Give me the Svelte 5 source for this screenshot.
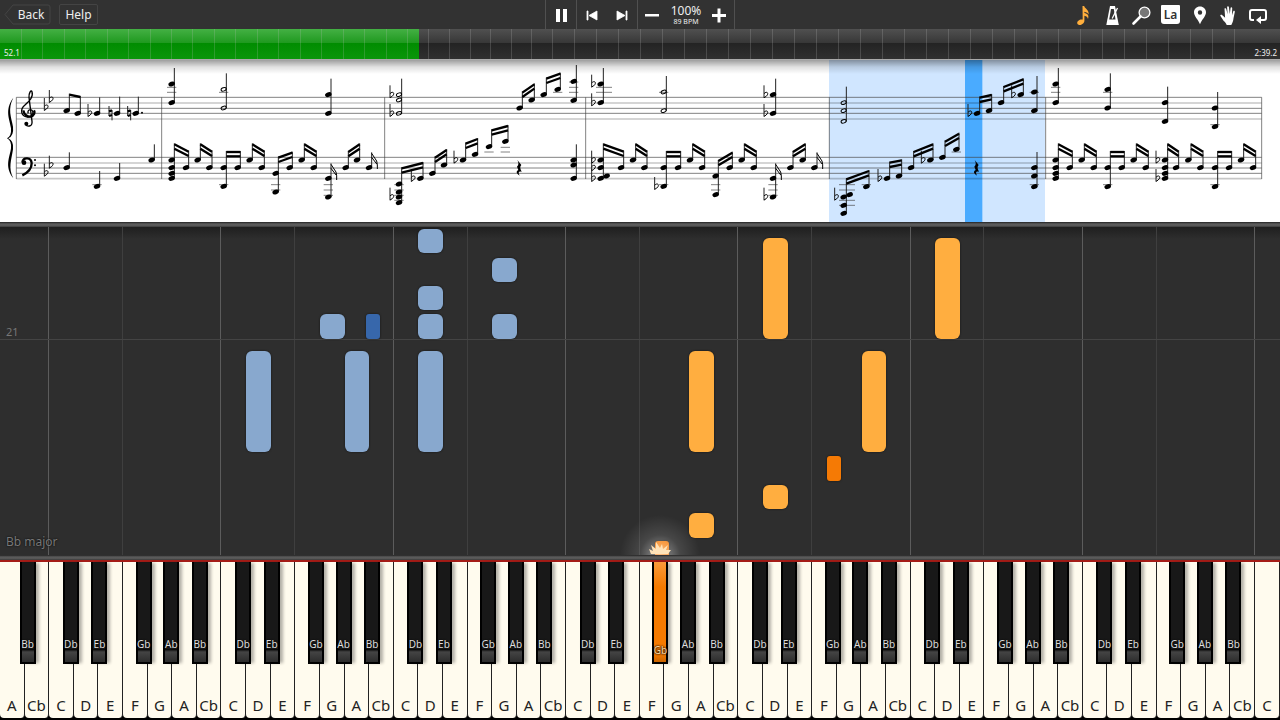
<script>
    // widths of the measures on the progress bar
    const measures = [218, ...Array(19).fill(214), ...Array(6).fill(205), ...Array(32).fill(220), 245];
    const progress = 32.7;

    const names = ['A', 'Cb', 'C', 'D', 'E', 'F', 'G'];
    // black key that sits right of a white key, and how far off the gap it is
    const blacks = {
        A: { name: 'Bb', shift: 4 },
        C: { name: 'Db', shift: -2 },
        D: { name: 'Eb', shift: 2 },
        F: { name: 'Gb', shift: -3 },
        G: { name: 'Ab', shift: 0 }
    };
    const keys = Array.from({ length: 52 }, (_, i) => ({
        id: i,
        name: names[i % 7],
        black: i < 51 ? blacks[names[i % 7]] : undefined
    }));
    const pressed = 26;

    // key = white key index, bottom = distance from the keyboard
    const falling = [
        { key: 17, bottom: 302, height: 24, hand: 'left' },
        { key: 20, bottom: 273, height: 24, hand: 'left' },
        { key: 17, bottom: 245, height: 24, hand: 'left' },
        { key: 17, bottom: 216, height: 25, hand: 'left' },
        { key: 20, bottom: 216, height: 25, hand: 'left' },
        { key: 13, bottom: 216, height: 25, hand: 'left' },
        { key: 14, bottom: 216, height: 25, hand: 'left', sharp: 4 },
        { key: 10, bottom: 103, height: 101, hand: 'left' },
        { key: 14, bottom: 103, height: 101, hand: 'left' },
        { key: 17, bottom: 103, height: 101, hand: 'left' },
        { key: 31, bottom: 216, height: 101, hand: 'right' },
        { key: 38, bottom: 216, height: 101, hand: 'right' },
        { key: 28, bottom: 103, height: 101, hand: 'right' },
        { key: 35, bottom: 103, height: 101, hand: 'right' },
        { key: 33, bottom: 74, height: 25, hand: 'right', sharp: -3 },
        { key: 31, bottom: 46, height: 24, hand: 'right' },
        { key: 28, bottom: 17, height: 25, hand: 'right' },
        { key: 26, bottom: -12, height: 26, hand: 'right', sharp: -3 }
    ];

    // score: x, note heads, top of the stem, extras
    const c = (x, n, top, extra = {}) => ({ x, n, top, flats: [], ledgers: [], ...extra });
    const down = (x1, x2) => [c(x1, [300], 250), c(x2, [323], 272)];
    const L3 = [374, 390, 406];

    const score = [
        {
            x: 0,
            chords: [
                c(200, [152], 101), c(233, [160], 108),
                c(291, [160], 112, { flats: [160] }),
                c(351, [160], 110, { natural: true }),
                c(407, [160], 110, { natural: true, dot: true }),
                c(200, [323], 277), c(291, [379], 333, { ledgers: [374] }),
                c(351, [355], 309), c(455, [300], 253)
            ],
            beams: [[208, 101, 241, 108, 1]]
        },
        {
            x: 0,
            chords: [
                c(515, [72, 128], 24, { ledgers: [82, 97] }),
                c(671, [88, 144], 40, { half: true, ledgers: [97] }),
                c(985, [104, 160], 56),
                c(515, [300, 323, 340, 355], 250), c(558, [323], 272),
                ...down(593, 628),
                c(671, [323, 379], 273, { ledgers: [374] }), c(713, [323], 273),
                ...down(749, 785),
                c(827, [340, 396], 290, { ledgers: [374, 390] }), c(869, [323], 275),
                ...down(905, 941),
                c(985, [355, 411], 310, { ledgers: L3, flag: true }),
                c(1037, [323], 273), c(1071, [300], 250),
                c(1107, [323], 277, { flag: true })
            ],
            beams: [
                [523, 250, 566, 272], [601, 250, 636, 272], [679, 273, 721, 273], [757, 250, 793, 272],
                [835, 290, 877, 275], [913, 250, 949, 272], [1045, 273, 1079, 250]
            ]
        },
        {
            x: 960,
            chords: [
                c(237, [104, 120, 160], 56, { half: true, flats: [104, 160] }),
                c(599, [144], 95), c(635, [120], 70), c(671, [104], 53),
                c(713, [88], 38, { ledgers: [97] }),
                c(761, [64, 121], 15, { ledgers: [66, 82, 97] }),
                c(237, [372, 396, 411, 428], 322, { flats: [411], ledgers: [374, 390, 406, 421] }),
                c(301, [355], 306, { flats: [355] }),
                c(337, [340], 290), c(372, [315], 267),
                c(429, [300], 248, { flats: [300] }), c(465, [283], 234),
                c(507, [260], 208, { ledgers: [276] }), c(556, [244], 195, { ledgers: [262, 276] }),
                c(761, [300, 315, 355], 253)
            ],
            beams: [
                [607, 95, 643, 70], [679, 53, 721, 38], [245, 322, 309, 306], [345, 290, 380, 267],
                [437, 248, 473, 234], [515, 208, 564, 195]
            ],
            rest: 597
        },
        {
            x: 1740,
            chords: [
                c(62, [72, 128], 24, { flats: [72, 128], ledgers: [82, 97], wide: 20 }),
                c(251, [96, 152], 48, { half: true, ledgers: [97] }),
                c(579, [104, 160], 56, { flats: [104, 160] }),
                c(62, [300, 323, 355], 250, { flats: [300, 323, 355], second: 348 }), c(123, [323], 272),
                ...down(159, 193),
                c(251, [323, 379], 273, { flats: [379], ledgers: [374] }), c(294, [323], 273),
                ...down(330, 366),
                c(407, [348, 404], 300, { ledgers: [374, 390] }), c(449, [323], 275),
                ...down(485, 521),
                c(579, [355, 411], 310, { flats: [411], ledgers: L3, flag: true }),
                c(631, [323], 273), c(668, [300], 250),
                c(703, [323], 277, { flag: true })
            ],
            beams: [
                [70, 250, 131, 272], [167, 250, 201, 272], [259, 273, 302, 273], [338, 250, 374, 272],
                [415, 300, 457, 275], [493, 250, 529, 272], [639, 273, 676, 250]
            ]
        },
        {
            x: 2460,
            chords: [
                c(71, [128, 152, 184], 80, { half: true }),
                c(471, [160], 110, { flats: [160] }), c(507, [152], 102),
                c(543, [128], 78), c(602, [104], 55, { flats: [104] }),
                c(643, [96, 152], 48, { ledgers: [97] }),
                c(71, [411, 436, 460], 355, { flats: [411], second: 404, wide: 20, ledgers: [374, 390, 421, 436] }),
                c(139, [380], 330, { ledgers: [374] }),
                c(201, [355], 305, { flats: [355] }), c(237, [348], 298),
                c(273, [323], 273), c(331, [300], 250, { flats: [300] }),
                c(367, [292], 242), c(409, [268], 218, { ledgers: [276] }),
                c(643, [323, 348, 380], 276, { ledgers: [374] })
            ],
            beams: [
                [479, 110, 515, 102], [551, 78, 610, 55], [79, 355, 147, 330], [209, 305, 245, 298],
                [281, 273, 339, 250], [375, 242, 417, 218]
            ],
            rest: 469
        },
        {
            x: 3090,
            chords: [
                c(77, [72, 128], 24, { ledgers: [82, 97] }),
                c(233, [88, 144], 40, { ledgers: [97] }),
                c(405, [128, 184], 80), c(555, [144, 200], 96, { ledgers: [194] }),
                c(77, [300, 323, 340, 355], 250), c(119, [323], 272),
                ...down(155, 191),
                c(233, [323, 380], 273, { ledgers: [374] }), c(275, [323], 273),
                ...down(311, 347),
                c(405, [300, 323, 340, 355], 250, { flats: [300, 355] }), c(438, [323], 272),
                ...down(475, 511),
                c(555, [323, 380], 273, { ledgers: [374] }), c(597, [323], 273),
                ...down(633, 669)
            ],
            beams: [
                [85, 250, 127, 272], [163, 250, 199, 272], [241, 273, 283, 273], [319, 250, 355, 272],
                [413, 250, 446, 272], [483, 250, 519, 272], [563, 273, 605, 273], [641, 250, 677, 272]
            ]
        }
    ];

    const darkLines = [112, 145, 160, 292, 324, 340];
    const paleLines = [129, 177, 309, 356];
    const barLines = [49, 485, 1154, 1757, 2488, 3137, 3785];
    const signature = [[137, 142], [152, 118], [137, 339], [152, 315]];
</script>

{#snippet flat(x, y)}
    <path class="stem" d="M{x - 4} {y - 28}V{y + 10}" />
    <path class="bowl" d="M{x - 4} {y - 3}C{x + 3} {y - 11} {x + 10} {y - 6} {x + 6} {y + 1}Q{x + 3} {y + 6} {x - 4} {y + 9}" />
{/snippet}

<div class="app">
    <header class="toolbar">
        <nav>
            <button class="back">
                <svg viewBox="0 0 47 21" width="47" height="21"><path d="M9 1H44Q46 1 46 3V18Q46 20 44 20H9L1 10.500Z" fill="none" stroke="#444" /></svg>
                <span>Back</span>
            </button>
            <button class="help">Help</button>
        </nav>

        <div class="transport">
            <div class="group">
                <button class="icon" aria-label="Pause"><svg viewBox="0 0 30 28"><path d="M10 8h4v13h-4zM17 8h4v13h-4z" /></svg></button>
            </div>
            <div class="group">
                <button class="icon" aria-label="Previous"><svg viewBox="0 0 30 28"><path d="M10 10h1v9h-1zM20 10v9l-8-4.500z" stroke="#fff" stroke-width=".8" /></svg></button>
                <button class="icon" aria-label="Next"><svg viewBox="0 0 30 28"><path d="M19 10h1v9h-1zM10 10v9l8-4.500z" stroke="#fff" stroke-width=".8" /></svg></button>
            </div>
            <div class="group">
                <button class="icon" aria-label="Slower"><svg viewBox="0 0 30 28"><path d="M7 13h14v2.500H7z" /></svg></button>
                <div class="tempo"><span>100%</span><small>89 BPM</small></div>
                <button class="icon" aria-label="Faster"><svg viewBox="0 0 30 28"><path d="M8 13h14v3H8zM13.500 7.500h3v14h-3z" /></svg></button>
            </div>
        </div>

        <div class="tools">
            <button class="icon" aria-label="Notes">
                <svg viewBox="0 0 30 28" class="amber"><path d="M13.500 5H15.200C15.500 7.500 20.600 9 19.500 13.500C19 12 17.500 11.200 15.400 10.800V12C18.500 12.800 20.300 14 19 18C18.600 16 17.500 15.200 15.400 14.800V20C15.200 23.500 9.500 25.500 8.300 22.500C7.700 19.800 11.300 17.800 13.700 18.600Z" /></svg>
            </button>
            <button class="icon" aria-label="Metronome">
                <svg viewBox="0 0 30 28"><path d="M12 5h5l3.800 19H8.300z" /><path d="M13 8h2.800l1.700 10.500h-6.300z" fill="#333" /><path d="M14.200 17.500L19.500 7" stroke="#fff" stroke-width="1.300" /></svg>
            </button>
            <button class="icon" aria-label="Zoom">
                <svg viewBox="0 0 30 28"><circle cx="17.500" cy="11.500" r="5.400" fill="#777" stroke="#fff" stroke-width="1.300" /><path d="M13.500 15.500L6.500 22.500" stroke="#fff" stroke-width="2.600" stroke-linecap="round" /></svg>
            </button>
            <button class="icon" aria-label="Note names"><span class="la">La</span></button>
            <button class="icon" aria-label="Bookmark">
                <svg viewBox="0 0 30 28"><path fill-rule="evenodd" d="M15 5.500c-3.400 0-6 2.600-6 5.700 0 4 4 7 6 12 2-5 6-8 6-12 0-3.100-2.600-5.700-6-5.700zm0 3.800a2.200 2.200 0 1 1 0 4.400 2.200 2.200 0 0 1 0-4.400z" /></svg>
            </button>
            <button class="icon" aria-label="Hands">
                <svg viewBox="0 0 30 28"><path d="M10.500 7.500c1-.7 1.600 0 1.800.8l1.300 5-.5-7.200c.1-1.100 1.600-1.100 1.800 0l.9 7 .8-6.300c.3-1 1.600-.8 1.600.3l-.2 7.200 1.300-4c.5-1 1.700-.4 1.500.6l-1.300 6.400c-.2 3-1.200 4.700-2.200 6.700h-4.600c-.7-1.800-1.600-2.900-3-4l-3.400-5.300c-.1-1 1.100-1.400 2-.5l2.800 2.500z" /></svg>
            </button>
            <button class="icon" aria-label="Loop">
                <svg viewBox="0 0 30 28"><path d="M11 19H9Q7 19 7 17V11Q7 9 9 9H21Q23 9 23 11V17Q23 19 21 19H17" fill="none" stroke="#fff" stroke-width="2" /><path d="M18 15v8l-5-4z" /></svg>
            </button>
        </div>
    </header>

    <div class="timeline" role="progressbar" aria-label="Song position" aria-valuenow={progress}>
        <div class="played" style="width: {progress}%"></div>
        <div class="ticks">
            {#each measures as m}<i style="flex-grow: {m}"></i>{/each}
        </div>
        <div class="times"><span>52.1</span><span>2:39.2</span></div>
    </div>

    <svg class="sheet" viewBox="0 0 3840 486" role="img" aria-label="Sheet music">
        <rect x="2487" width="648" height="486" fill="#d0e6ff" />
        <rect x="2895" width="52" height="486" fill="#4aabff" />
        {#each paleLines as y}<path class="pale" d="M49 {y}H3785" />{/each}
        {#each darkLines as y}<path class="thin" d="M49 {y}H3785" />{/each}
        {#each barLines as x}<path class="thin" d="M{x} 112V357" />{/each}

        <path d="M40 113C12 150 30 180 33 205Q35 228 21 235Q35 242 33 265C30 290 12 320 40 355C24 325 34 300 39 268Q42 243 25 235Q42 227 39 200C34 170 22 148 40 113Z" />
        <path class="clef" d="M85 160C80 152 92 144 98 153C102 163 92 173 82 171C62 168 60 148 74 136C88 123 101 111 96 95C93 88 86 100 87 112L96 184C98 200 80 203 76 191" />
        <path class="clef fat" d="M70 151C72 163 82 171 92 170C102 167 106 158 102 151" />
        <circle cx="79" cy="191" r="6" />
        <path class="clef fat" d="M67 307C70 290 94 292 95 310C95 328 82 339 67 346" />
        <circle cx="72" cy="308" r="7" />
        <circle cx="105" cy="300" r="3" /><circle cx="105" cy="316" r="3" />
        {#each signature as [x, y]}{@render flat(x, y)}{/each}

        {#each score as bar}
            <g transform="translate({bar.x})">
                {#each bar.chords as ch}
                    {#each ch.ledgers as y}<path class="thin" d="M{ch.x - 14} {y}H{ch.x + 14 + (ch.wide ?? 0)}" />{/each}
                    <path class="stem" d="M{ch.x + 8} {ch.top}V{Math.max(...ch.n)}" />
                    {#each ch.n as y}
                        <ellipse class:half={ch.half} rx={ch.half ? 8 : 10} ry={ch.half ? 5 : 7} transform="translate({ch.x} {y}) rotate(-20)" />
                    {/each}
                    {#if ch.second}
                        <ellipse rx="10" ry="7" transform="translate({ch.x + 18} {ch.second}) rotate(-20)" />
                    {/if}
                    {#each ch.flats as y}{@render flat(ch.x - 23, y)}{/each}
                    {#if ch.natural}
                        <path class="stem" d="M{ch.x - 24} 138V168M{ch.x - 15} 150V181" />
                        <path class="beam" d="M{ch.x - 24} 154l9 -3M{ch.x - 24} 168l9 -3" />
                    {/if}
                    {#if ch.dot}<circle cx={ch.x + 19} cy="158" r="3" />{/if}
                    {#if ch.flag}
                        <path class="flag" d="M{ch.x + 8} {ch.top + 3}L{ch.x + 23} {ch.top + 26}Q{ch.x + 26} {ch.top + 36} {ch.x + 25} {ch.top + 50}M{ch.x + 8} {ch.top + 15}L{ch.x + 24} {ch.top + 36}" />
                    {/if}
                {/each}
                {#each bar.beams as [x1, y1, x2, y2, single]}
                    <path class="beam" d="M{x1} {y1 + 3}L{x2} {y2 + 3}" />
                    {#if !single}<path class="beam" d="M{x1} {y1 + 16}L{x2} {y2 + 16}" />{/if}
                {/each}
                {#if bar.rest}
                    <path d="M{bar.rest - 5} 300L{bar.rest + 7} 315Q{bar.rest} 322 {bar.rest + 8} 335Q{bar.rest - 6} 332 {bar.rest + 2} 347Q{bar.rest - 14} 336 {bar.rest - 2} 330L{bar.rest - 6} 320Q{bar.rest + 2} 312 {bar.rest - 5} 300Z" />
                {/if}
            </g>
        {/each}

        <defs>
            <linearGradient id="shade" x2="0" y2="1">
                <stop offset="0" stop-color="#000" stop-opacity=".38" />
                <stop offset=".5" stop-color="#000" stop-opacity=".12" />
                <stop offset="1" stop-color="#000" stop-opacity="0" />
            </linearGradient>
        </defs>
        <rect width="3840" height="42" fill="url(#shade)" />
    </svg>

    <div class="divider"></div>

    <main class="roll">
        <div class="lanes">
            {#each keys as key (key.id)}<i class:octave={key.name === 'C'} class:mid={key.name === 'F'}></i>{/each}
        </div>
        <div class="measure"><span>21</span></div>
        {#each falling as n}
            <div
                class="note {n.hand}"
                class:sharp={n.sharp}
                style="left: {n.sharp ? `calc(${((n.key + 1) / 52) * 100}% + ${n.sharp - 7}px)` : `${(n.key / 52) * 100}%`}; bottom: {n.bottom}px; height: {n.height}px"
            ></div>
        {/each}
        <div class="spark" style="left: {(26.8 / 52) * 100}%">
            <svg viewBox="0 0 24 16" width="24" height="16"><path d="M3 15L1 10L5 12L3 6L8 10L8 3L12 9L14 5L15 10L20 6L18 11L23 11L20 15Z" /></svg>
        </div>
        <span class="tonality">Bb major</span>
    </main>

    <div class="divider"></div>

    <div class="keyboard">
        {#each keys as key (key.id)}
            <div class="slot">
                <button class="white">{key.name}</button>
                {#if key.black}
                    <button
                        class="black"
                        class:pressed={key.id === pressed}
                        style="left: calc(100% + {key.black.shift - 9}px)"
                    ><span>{key.black.name}</span></button>
                {/if}
            </div>
        {/each}
    </div>
</div>

<style>
    :global(body) {
        margin: 0;
        background: #000;
    }

    .app {
        display: flex;
        flex-direction: column;
        min-height: 100vh;
        overflow: hidden;
        font-family: "Noto Sans", "Open Sans", sans-serif;
        color: #eee;
    }

    button {
        padding: 0;
        border: 0;
        background: none;
        color: inherit;
        font: inherit;
    }

    .toolbar {
        display: grid;
        grid-template-columns: 1fr auto 1fr;
        height: 29px;
        background: #323232;
    }

    nav {
        display: flex;
        align-items: center;
        gap: 9px;
        padding-left: 4px;
        font-size: 12px;
    }

    .back {
        display: grid;
        align-items: center;
        width: 46px;
        height: 21px;
    }

    .back svg,
    .back span {
        grid-area: 1 / 1;
    }

    .back span {
        padding-left: 7px;
    }

    .help {
        width: 39px;
        height: 21px;
        border: 1px solid #444;
        border-radius: 2px;
        line-height: 18px;
    }

    .transport {
        display: flex;
        border-left: 1px solid #505050;
    }

    .group {
        display: flex;
        border-right: 1px solid #505050;
    }

    .icon {
        display: flex;
        align-items: center;
        justify-content: center;
        width: 30px;
        height: 29px;
    }

    .icon svg {
        width: 30px;
        height: 28px;
        flex: none;
        fill: #fff;
    }

    .icon svg.amber {
        fill: #ffae3c;
    }

    .tempo {
        display: flex;
        flex-direction: column;
        align-items: center;
        width: 36px;
        padding-top: 4px;
        white-space: nowrap;
    }

    .tempo span {
        font-size: 12px;
        line-height: 14px;
    }

    .tempo small {
        font-size: 7px;
        line-height: 8px;
    }

    .tools {
        display: flex;
        justify-content: flex-end;
        padding-right: 8px;
    }

    .tools .icon {
        width: 29px;
    }

    .la {
        width: 19px;
        height: 19px;
        border-radius: 1px 1px 3px 3px;
        background: #fff;
        color: #333;
        font-size: 12px;
        font-weight: 600;
        line-height: 20px;
    }

    .timeline {
        display: grid;
        height: 30px;
        border-bottom: 1px solid #aaa;
        background: linear-gradient(#505050, #383838 45%, #232323 46%, #303030);
    }

    .played,
    .ticks,
    .times {
        grid-area: 1 / 1;
    }

    .played {
        background: linear-gradient(#44b044, #209a20 45%, #008c00 46%, #0a960a);
    }

    .ticks {
        display: flex;
    }

    .ticks i {
        flex-basis: 0;
        box-sizing: border-box;
        border-right: 1px solid rgba(190, 190, 190, 0.22);
    }

    .ticks i:nth-last-child(-n + 2) {
        border: 0;
    }

    .times {
        display: flex;
        justify-content: space-between;
        align-items: flex-end;
        padding: 0 3px 1px 4px;
        font-size: 8px;
        line-height: 11px;
    }

    .sheet {
        display: block;
        width: 100%;
        background: #fff;
    }

    .thin {
        fill: none;
        stroke: #444;
        stroke-width: 2;
    }

    .pale {
        stroke: #000;
        stroke-opacity: 0.22;
        stroke-width: 5;
    }

    .stem {
        stroke: #222;
        stroke-width: 3;
    }

    .beam {
        stroke: #000;
        stroke-width: 7;
    }

    .flag,
    .bowl {
        fill: none;
        stroke: #000;
        stroke-width: 3;
    }

    .clef {
        fill: none;
        stroke: #000;
        stroke-width: 4;
    }

    .clef.fat {
        stroke-width: 7;
    }

    .half {
        fill: none;
        stroke: #000;
        stroke-width: 3;
    }

    .divider {
        height: 5px;
        background: linear-gradient(#222, #5c5c5c 40%, #555 80%, #333);
    }

    .roll {
        position: relative;
        flex: 1;
        min-height: 328px;
        overflow: hidden;
        background: linear-gradient(#1f1f1f, #2e2e2e 12px);
    }

    .lanes {
        position: absolute;
        inset: 0;
        display: flex;
    }

    .lanes i {
        flex: 1;
    }

    .octave {
        box-shadow: -1px 0 #5c5c5c;
    }

    .mid {
        box-shadow: -1px 0 #3f3f3f;
    }

    .measure {
        position: absolute;
        left: 0;
        right: 0;
        bottom: 215px;
        padding-left: 6px;
        border-bottom: 1px solid #444;
        color: #777;
        font-size: 11px;
        line-height: 14px;
    }

    .note {
        position: absolute;
        width: calc(100% / 52);
        border-radius: 6px;
        box-shadow: 0 0 2px #111;
    }

    .note.sharp {
        width: 14px;
        border-radius: 3px;
    }

    .left {
        background: #88a8ce;
    }

    .right {
        background: #ffae40;
    }

    .left.sharp {
        background: #3767ab;
    }

    .right.sharp {
        background: #f57a05;
    }

    .spark {
        position: absolute;
        bottom: 0;
        display: flex;
        justify-content: center;
        align-items: flex-end;
        width: 100px;
        height: 50px;
        margin-left: -50px;
        background: radial-gradient(ellipse 40px 40px at 50% 100%, rgba(255, 255, 255, 0.5), rgba(255, 255, 255, 0.12) 50%, transparent);
    }

    .spark path {
        fill: #ffe3b8;
    }

    .tonality {
        position: absolute;
        left: 6px;
        bottom: 4px;
        color: #777;
        font-size: 12px;
        line-height: 18px;
        text-shadow: 0 0 2px #000;
    }

    .keyboard {
        display: flex;
        padding-bottom: 2px;
        border-top: 2px solid #a51c17;
        background: #000;
    }

    .slot {
        position: relative;
        flex: 1;
    }

    .white {
        display: flex;
        align-items: flex-end;
        justify-content: center;
        box-sizing: border-box;
        width: 100%;
        height: 156px;
        padding-bottom: 3px;
        border-right: 1px solid #222;
        border-radius: 0 0 4px 4px;
        background: #fffbee;
        color: #222;
        font-size: 15px;
        line-height: 20px;
    }

    .black {
        position: absolute;
        top: 0;
        z-index: 1;
        display: flex;
        align-items: flex-end;
        justify-content: center;
        box-sizing: border-box;
        width: 16px;
        height: 102px;
        padding-bottom: 12px;
        border: solid #000;
        border-width: 0 2px 2px;
        background: linear-gradient(#181818 87%, #000 87%, #444 90%, #2c2c2c);
        box-shadow: 4px 0 3px -1px rgba(0, 0, 0, 0.3);
        color: #ddd;
        font-size: 10px;
        line-height: 12px;
        text-shadow: 0 0 2px #000;
    }

    .pressed {
        padding-bottom: 6px;
        background: linear-gradient(#fa9a3a, #f57a00 25%, #f57a00 92%, #c96400);
        color: #ffd9a0;
        text-shadow: 0 0 2px #000, 0 0 2px #000;
    }
</style>
